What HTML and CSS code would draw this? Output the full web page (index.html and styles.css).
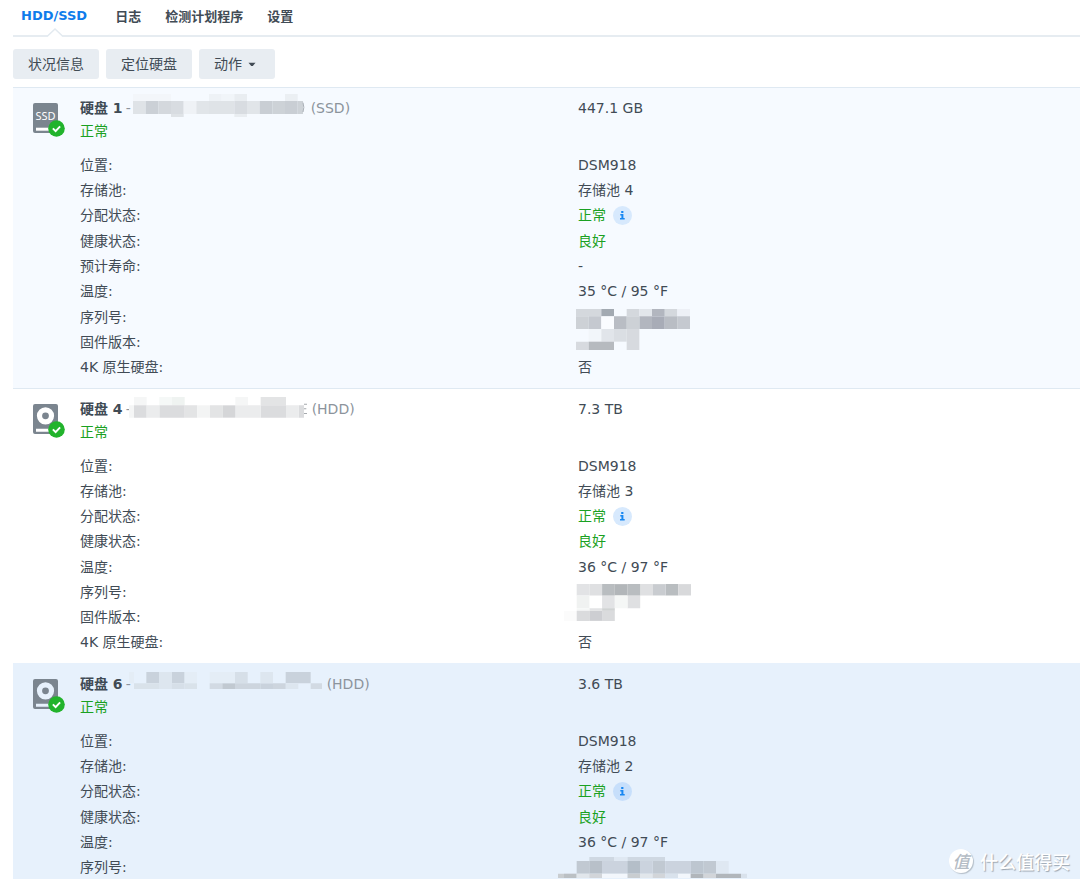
FILE: index.html
```html
<!DOCTYPE html>
<html lang="zh-CN">
<head>
<meta charset="utf-8">
<meta name="viewport" content="width=device-width, initial-scale=1">
<title>HDD/SSD</title>
<link rel="stylesheet" href="styles.css">
</head>
<body>
<svg class="defs" aria-hidden="true">
  <symbol id="ok" viewBox="0 0 17 17"><circle cx="8.500" cy="8.500" r="8.300" fill="#22b32c"/><path d="M4.900 8.400l2.700 2.700 4.500-4.700" fill="none" stroke="#fff" stroke-width="2"/></symbol>
  <symbol id="hdd" viewBox="0 0 34 36"><path fill="#7b858f" fill-rule="evenodd" d="M3 1h21a2 2 0 0 1 2 2v26a2 2 0 0 1-2 2H3a2 2 0 0 1-2-2V3a2 2 0 0 1 2-2zM13.500 4.200a8.600 8.600 0 1 0 0 17.200 8.600 8.600 0 0 0 0-17.200zM4 25.700v3h13v-3z"/><circle cx="13.500" cy="12.800" r="3.400" fill="#7b858f"/><use href="#ok" x="16" y="18" width="17" height="17"/></symbol>
  <symbol id="info" viewBox="0 0 19 19"><circle class="info-bg" cx="9.500" cy="9.500" r="9.500"/><path fill="#1787f2" d="M8.200 5h2.200v2H8.200zM7.300 8h3.100v4h1.300v1.500H7V12h1.400V9.500H7.300z"/></symbol>
</svg>
<div class="app">
  <nav class="tabs">
    <button class="tab active" type="button">HDD/SSD<svg class="notch" viewBox="0 0 16 9"><path d="M0 9L8 1l8 8z" fill="#fff"/><path d="M0 8.500L8 1l8 7.500" fill="none" stroke="#e3eaf0" stroke-width="1.500"/></svg></button>
    <button class="tab" type="button">日志</button>
    <button class="tab" type="button">检测计划程序</button>
    <button class="tab" type="button">设置</button>
  </nav>
  <div class="toolbar">
    <button class="btn" type="button">状况信息</button>
    <button class="btn" type="button">定位硬盘</button>
    <button class="btn menu" type="button">动作<svg class="caret" viewBox="0 0 8 5"><path d="M0.500 0.800h7L4.800 4h-1.600z" fill="#414b55"/></svg></button>
  </div>
  <main class="list">
    <section class="disk tinted">
      <svg class="disk-icon" viewBox="0 0 34 36"><path fill="#7b858f" d="M3 1h21a2 2 0 0 1 2 2v26a2 2 0 0 1-2 2H3a2 2 0 0 1-2-2V3a2 2 0 0 1 2-2z"/><path fill="#fff" d="M4 25.700h13v3H4z"/><text x="13.500" y="18" text-anchor="middle" class="ssd-text">SSD</text><use href="#ok" x="16" y="18" width="17" height="17"/></svg>
      <div class="body">
        <header class="row">
          <div>
            <h2 class="name"><b>硬盘 1</b><span class="dash">-</span><svg class="model" width="172" height="24" viewBox="0 0 516 72">
              <path fill="#f3f6fa" d="M0 0h114v21H0z"/><path fill="#eef2f6" d="M228 0h38v21h-38z"/><path fill="#f1f5f9" d="M266 0h38v21h-38z"/><path fill="#e9edf1" d="M304 0h38v21h-38zM304 60h38v9h-38z"/><path fill="#ebeff3" d="M456 0h38v21h-38z"/>
              <path fill="#dfe3e7" d="M0 21h38v39H0zM228 21h76v39h-76zM114 60h38v9h-38z"/><path fill="#cbd0d6" d="M38 21h38v39H38z"/><path fill="#d4d8dd" d="M76 21h38v39H76z"/><path fill="#d8dce1" d="M114 21h38v39h-38zM304 21h38v39h-38z"/><path fill="#eff2f6" d="M152 21h38v39h-38z"/><path fill="#e1e5e9" d="M190 21h38v39h-38zM342 21h38v39h-38z"/><path fill="#c9ced4" d="M380 21h38v39h-38zM456 21h38v39h-38z"/><path fill="#cdd2d7" d="M418 21h38v39h-38zM494 21h16v39h-16z"/><path d="M510 26q5 14 0 28" fill="none" stroke="#a9afb6" stroke-width="3"/>
            </svg><span class="kind">(SSD)</span></h2>
            <p class="ok">正常</p>
          </div>
          <div class="size">447.1 GB</div>
        </header>
        <dl class="facts nine">
          <div class="row"><dt>位置:</dt><dd>DSM918</dd></div>
          <div class="row"><dt>存储池:</dt><dd>存储池 4</dd></div>
          <div class="row"><dt>分配状态:</dt><dd class="ok">正常<svg class="info"><use href="#info"/></svg></dd></div>
          <div class="row"><dt>健康状态:</dt><dd class="ok">良好</dd></div>
          <div class="row"><dt>预计寿命:</dt><dd>-</dd></div>
          <div class="row"><dt>温度:</dt><dd>35 °C / 95 °F</dd></div>
          <div class="row"><dt>序列号:</dt><dd><svg class="mask mask-a" width="114" height="41" viewBox="0 0 342 123">
            <path fill="#d4d8dd" d="M0 0h76v22H0zM152 0h38v22h-38zM266 0h38v22h-38z"/><path fill="#a3aab2" d="M76 0h38v22H76z"/><path fill="#e2e6eb" d="M190 0h38v22h-38z"/><path fill="#b2b6bf" d="M228 0h38v22h-38zM190 22h38v38h-38z"/><path fill="#edf0f6" d="M304 0h38v22h-38z"/>
            <path fill="#cdd1d6" d="M0 22h38v38H0zM152 22h38v38h-38z"/><path fill="#c5c9d0" d="M38 22h38v38H38zM304 22h38v38h-38z"/><path fill="#fafcff" d="M76 22h38v38H76z"/><path fill="#b9bdc4" d="M114 22h38v38h-38zM266 22h38v38h-38z"/><path fill="#a8acb7" d="M228 22h38v38h-38z"/>
            <path fill="#f2f6fa" d="M38 60h38v38H38z"/><path fill="#e1e5ea" d="M76 60h38v38H76z"/><path fill="#dadee3" d="M114 60h38v38h-38z"/><path fill="#d7dadf" d="M152 60h38v63h-38zM0 98h38v25H0z"/><path fill="#b6babf" d="M38 98h76v25H38z"/>
          </svg></dd></div>
          <div class="row"><dt>固件版本:</dt><dd></dd></div>
          <div class="row"><dt>4K 原生硬盘:</dt><dd>否</dd></div>
        </dl>
      </div>
    </section>
    <section class="disk">
      <svg class="disk-icon"><use href="#hdd"/></svg>
      <div class="body">
        <header class="row">
          <div>
            <h2 class="name"><b>硬盘 4</b><span class="dash">-</span><svg class="model wide" width="178" height="21" viewBox="0 0 534 63">
              <path fill="#f5f6f6" d="M15 0h38v25H15zM319 0h38v25h-38zM0 25h15v37H0z"/><path fill="#f5f8f7" d="M91 0h38v25H91z"/><path fill="#eff3f1" d="M129 0h38v25h-38z"/><path fill="#e3e4e5" d="M395 0h76v25h-76zM243 25h38v37h-38zM167 25h38v37h-38z"/>
              <path fill="#dbdcde" d="M15 25h38v37H15zM91 25h76v37H91zM395 25h76v37h-76zM509 25h16v37h-16z"/><path fill="#ebeced" d="M53 25h38v37H53zM319 25h76v37h-76zM471 25h38v37h-38z"/><path fill="#f3f4f4" d="M205 25h38v37h-38z"/><path fill="#d5d6d8" d="M281 25h38v37h-38z"/><path fill="#a5a9ad" d="M525 20h9v3h-9zM525 34h7v3h-7zM525 48h9v3h-9z"/>
            </svg><span class="kind">(HDD)</span></h2>
            <p class="ok">正常</p>
          </div>
          <div class="size">7.3 TB</div>
        </header>
        <dl class="facts eight">
          <div class="row"><dt>位置:</dt><dd>DSM918</dd></div>
          <div class="row"><dt>存储池:</dt><dd>存储池 3</dd></div>
          <div class="row"><dt>分配状态:</dt><dd class="ok">正常<svg class="info"><use href="#info"/></svg></dd></div>
          <div class="row"><dt>健康状态:</dt><dd class="ok">良好</dd></div>
          <div class="row"><dt>温度:</dt><dd>36 °C / 97 °F</dd></div>
          <div class="row"><dt>序列号:</dt><dd><svg class="mask mask-b" width="127" height="37" viewBox="0 0 380 110">
            <path fill="#e2e3e5" d="M38 0h38v34H38zM114 34h38v38h-38zM76 72h38v8H76z"/><path fill="#dfe0e2" d="M76 0h38v34H76zM228 0h38v34h-38zM190 34h38v38h-38z"/><path fill="#b9bdc0" d="M114 0h38v34h-38zM190 0h38v34h-38zM304 0h38v34h-38z"/><path fill="#b2b6b9" d="M152 0h38v34h-38z"/><path fill="#c9ccd0" d="M266 0h38v34h-38z"/><path fill="#d8d9db" d="M342 0h38v34h-38z"/>
            <path fill="#f0f2f1" d="M38 34h38v38H38z"/><path fill="#f5f7f6" d="M152 34h38v38h-38zM38 72h38v8H38z"/><path fill="#d0d3d3" d="M114 72h38v8h-38z"/><path fill="#fbfbfb" d="M0 80h38v30H0z"/><path fill="#dadbdd" d="M38 80h38v30H38zM114 80h38v30h-38z"/><path fill="#cdced2" d="M76 80h38v30H76z"/>
          </svg></dd></div>
          <div class="row"><dt>固件版本:</dt><dd></dd></div>
          <div class="row"><dt>4K 原生硬盘:</dt><dd>否</dd></div>
        </dl>
      </div>
    </section>
    <section class="disk selected">
      <svg class="disk-icon"><use href="#hdd"/></svg>
      <div class="body">
        <header class="row">
          <div>
            <h2 class="name"><b>硬盘 6</b><span class="dash">-</span><svg class="model wide" width="193" height="24" viewBox="0 0 579 72">
              <path fill="#e4edf6" d="M0 0h15v34H0zM166 0h38v34h-38zM242 0h76v34h-76z"/><path fill="#c9d2dc" d="M52 0h38v34H52zM128 0h38v34h-38zM470 0h75v34h-75zM394 34h38v17h-38z"/><path fill="#dde6ef" d="M90 0h38v34H90zM394 0h38v34h-38zM90 34h38v17H90zM470 34h38v17h-38z"/><path fill="#d6dfe8" d="M318 0h38v34h-38zM128 34h38v17h-38z"/>
              <path fill="#d9e2ea" d="M15 34h75v17H15zM166 34h38v17h-38z"/><path fill="#d2dae3" d="M242 34h38v17h-38zM545 34h34v17h-34z"/><path fill="#c1c9d1" d="M280 34h38v17h-38z"/><path fill="#cdd5de" d="M318 34h76v17h-76zM432 34h38v17h-38z"/>
            </svg><span class="kind">(HDD)</span></h2>
            <p class="ok">正常</p>
          </div>
          <div class="size">3.6 TB</div>
        </header>
        <dl class="facts six">
          <div class="row"><dt>位置:</dt><dd>DSM918</dd></div>
          <div class="row"><dt>存储池:</dt><dd>存储池 2</dd></div>
          <div class="row"><dt>分配状态:</dt><dd class="ok">正常<svg class="info"><use href="#info"/></svg></dd></div>
          <div class="row"><dt>健康状态:</dt><dd class="ok">良好</dd></div>
          <div class="row"><dt>温度:</dt><dd>36 °C / 97 °F</dd></div>
          <div class="row"><dt>序列号:</dt><dd><svg class="mask mask-c" width="189" height="21" viewBox="0 0 567 63">
            <path fill="#cfd8e2" d="M94 0h75v12H94zM208 0h113v12H208z"/><path fill="#dfe8f2" d="M169 0h39v12h-39zM474 12h38v38h-38z"/>
            <path fill="#c1c9d2" d="M56 12h38v38H56zM284 12h38v38h-38zM436 12h38v38h-38z"/><path fill="#b8c0c9" d="M94 12h38v38H94z"/><path fill="#cbd3de" d="M132 12h76v38h-76zM246 12h38v38h-38zM322 12h76v38h-76z"/><path fill="#b4bec8" d="M208 12h38v38h-38z"/><path fill="#bdc6d0" d="M398 12h38v38h-38z"/>
            <path fill="#c9cdd0" d="M0 50h18v13H0zM208 50h38v13h-38z"/><path fill="#bbc0c4" d="M18 50h38v13H18z"/><path fill="#e1e6eb" d="M56 50h38v13H56zM246 50h38v13h-38z"/><path fill="#d2d5d9" d="M94 50h38v13H94zM284 50h38v13h-38zM436 50h38v13h-38z"/><path fill="#f3f7fc" d="M132 50h76v13h-76zM360 50h38v13h-38z"/><path fill="#d9e2ec" d="M322 50h38v13h-38zM549 50h18v13h-18z"/><path fill="#b1b6bb" d="M398 50h38v13h-38zM474 50h75v13h-75z"/>
          </svg></dd></div>
        </dl>
      </div>
    </section>
  </main>
  <div class="watermark"><span class="seal">值</span><span>什么值得买</span></div>
</div>
</body>
</html>
```
FILE: styles.css
```css
* { box-sizing: border-box; }
body {
  margin: 0;
  background: #fff;
  color: #414b55;
  font: 14px/24px "DejaVu Sans", "Noto Sans CJK SC", sans-serif;
}
h2, p, dl, dd { margin: 0; }
button { border: 0; color: inherit; font-family: inherit; cursor: pointer; }
.defs { position: absolute; width: 0; height: 0; }
.ssd-text { font: 11px "Noto Sans", sans-serif; fill: #fff; }

.app {
  position: relative;
  display: flex;
  flex-direction: column;
  height: 100vh;
  padding: 0 0 6px 13px;
  overflow: hidden;
}

.tabs {
  display: flex;
  gap: 24px;
  height: 37px;
  padding-left: 8px;
  border-bottom: 2px solid #e6ecf1;
}
.tab {
  position: relative;
  padding: 0 0 4px;
  background: none;
  font-size: 13px;
  font-weight: bold;
}
.tab.active { margin-right: 4px; color: #0f7ceb; }
.notch {
  position: absolute;
  bottom: -2px;
  left: calc(50% - 7px);
  width: 16px;
  height: 9px;
}

.toolbar { display: flex; gap: 7px; padding: 12px 0 8px; }
.btn {
  display: flex;
  align-items: center;
  height: 30px;
  padding: 0 15px 2px;
  border-radius: 3px;
  background: #e8edf2;
  font-size: 14px;
}
.btn.menu { gap: 6px; padding-right: 19px; }
.caret { width: 8px; height: 5px; margin-top: 3px; }

.list { flex: 1; min-height: 0; overflow: hidden; }
.disk {
  --info-bg: #d7e9fd;
  display: flex;
  padding: 8px 4px 8px 20px;
  border-top: 1px solid #dfe9f2;
}
.disk.tinted { background: #f6faff; }
.disk.selected { --info-bg: #c7dffb; background: #e7f1fc; border-color: #e7f1fc; }
.disk-icon { flex: none; width: 34px; height: 36px; margin: 6px 14px 0 -1px; }
.body { flex: 1; min-width: 0; }
.row { display: grid; grid-template-columns: 1fr 1fr; align-items: center; }
header.row { align-items: start; margin-bottom: 9px; }
.name { display: flex; height: 23px; font-size: 14px; font-weight: normal; }
.dash { width: 6px; margin-left: 3px; color: #8c949c; }
.model { flex: none; margin: -2px 6px 0 1px; }
.model.wide { margin: 0 5px 0 -3px; }
.kind { color: #8c949c; }
.ok { color: #1aa122; }

.facts { display: grid; grid-auto-rows: 1fr; }
.nine { min-height: 228px; }
.eight { min-height: 202px; }
.six { min-height: 152px; }
.facts dd { position: relative; display: flex; align-items: center; min-height: 24px; }
.info { width: 19px; height: 19px; margin-left: 7px; }
.info-bg { fill: var(--info-bg); }
.mask { position: absolute; }
.mask-a { top: 4px; left: -2px; }
.mask-b { top: 4px; left: -14px; }
.mask-c { top: 2px; left: -20px; }

.watermark {
  position: absolute;
  right: 10px;
  bottom: 11px;
  display: flex;
  align-items: center;
  gap: 7px;
  color: #fff;
  font: 500 18px/26px "Noto Sans CJK SC", sans-serif;
  text-shadow: 1px 1px 1px #9ba5b0;
}
.seal {
  width: 24px;
  height: 24px;
  border-radius: 50%;
  background: #fff;
  box-shadow: 1px 1px 1px #b4bec8;
  color: #b4bcc5;
  font-size: 17px;
  font-style: italic;
  line-height: 23px;
  text-align: center;
  text-shadow: none;
}
```
